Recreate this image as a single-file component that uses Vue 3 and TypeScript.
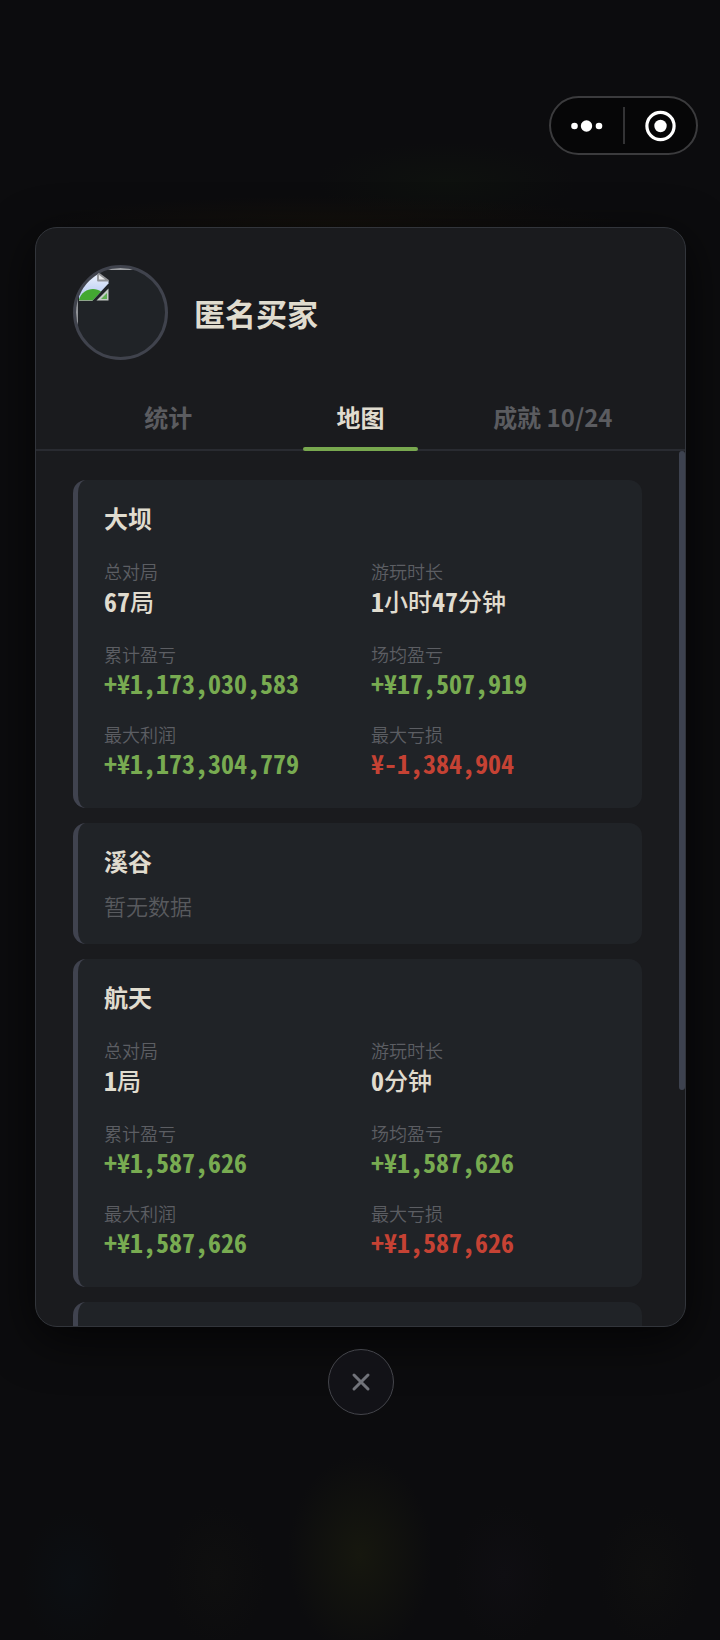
<script setup lang="ts">
import { ref } from 'vue'

type Tone = 'plain' | 'gain' | 'loss'

interface Stat {
  label: string
  value: string
  tone: Tone
}

interface GameMap {
  name: string
  stats: Stat[]
}

const tabs = ['统计', '地图', '成就 10/24']
const active = ref(1)

const labels = ['总对局', '游玩时长', '累计盈亏', '场均盈亏', '最大利润', '最大亏损']
const tones: Tone[] = ['plain', 'plain', 'gain', 'gain', 'gain', 'loss']

function toStats(values: string[]): Stat[] {
  return values.map((value, i) => ({ label: labels[i], value, tone: tones[i] }))
}

const maps: GameMap[] = [
  {
    name: '大坝',
    stats: toStats(['67局', '1小时47分钟', '+¥1,173,030,583', '+¥17,507,919', '+¥1,173,304,779', '¥-1,384,904']),
  },
  { name: '溪谷', stats: [] },
  {
    name: '航天',
    stats: toStats(['1局', '0分钟', '+¥1,587,626', '+¥1,587,626', '+¥1,587,626', '+¥1,587,626']),
  },
]

// Splits a value into Latin and Chinese runs, each set in its own face.
function runs(value: string): { text: string; han: boolean }[] {
  return (value.match(/[\u4e00-\u9fff]+|[^\u4e00-\u9fff]+/g) ?? []).map((text) => ({
    text,
    han: /[\u4e00-\u9fff]/.test(text),
  }))
}
</script>

<template>
  <div class="page">
    <header class="bar">
      <div class="capsule">
        <button type="button" class="capsule-btn" aria-label="更多">
          <svg width="32" height="32" viewBox="0 0 32 32" fill="#fff">
            <circle cx="3.5" cy="16" r="3.3" />
            <circle cx="15.5" cy="16" r="5.7" />
            <circle cx="28" cy="16" r="3.3" />
          </svg>
        </button>
        <span class="capsule-line"></span>
        <button type="button" class="capsule-btn" aria-label="关闭">
          <svg width="32" height="32" viewBox="0 0 32 32">
            <circle cx="16.5" cy="16" r="13.6" fill="none" stroke="#fff" stroke-width="3.2" />
            <circle cx="16.5" cy="16" r="6.2" fill="#fff" />
          </svg>
        </button>
      </div>
    </header>

    <main class="stage">
      <section class="modal">
        <div class="profile">
          <div class="avatar">
            <svg viewBox="0 0 89 89" width="89" height="89">
              <defs>
                <linearGradient id="sky" x1="0" y1="0" x2="0" y2="1">
                  <stop offset="0" stop-color="#eef3fd" />
                  <stop offset="1" stop-color="#adc4f0" />
                </linearGradient>
              </defs>
              <path d="M1 88V1H88" fill="none" stroke="#c4c6ca" stroke-width="1.4" />
              <path d="M3 5H22L32.5 13V15.5L16.5 32.5H3Z" fill="url(#sky)" />
              <path d="M3 31.5C5 25 11 21 17 21C20 21 23 22 25 23.5L16.5 32.5H3Z" fill="#43a832" />
              <path d="M32.5 20.5V32.5H20.5Z" fill="#c3cbc5" />
              <path d="M31 25V31H25Z" fill="#5fae52" />
              <path d="M3 32.5H16.5" stroke="#8fa58c" stroke-width="1.2" />
              <path d="M22 5V12.5H32Z" fill="#e9eaec" stroke="#909296" stroke-width="1.8" stroke-linejoin="round" />
            </svg>
          </div>
          <h1 class="name">匿名买家</h1>
        </div>

        <nav class="tabs" role="tablist">
          <button
            v-for="(tab, i) in tabs"
            :key="tab"
            type="button"
            role="tab"
            class="tab"
            :class="{ on: i === active }"
            :aria-selected="i === active"
            @click="active = i"
          >
            {{ tab }}
          </button>
        </nav>

        <div class="body">
          <div class="scroll">
            <article v-for="map in maps" :key="map.name" class="card">
              <h2 class="title">{{ map.name }}</h2>
              <dl v-if="map.stats.length" class="grid">
                <div v-for="stat in map.stats" :key="stat.label">
                  <dt class="label">{{ stat.label }}</dt>
                  <dd class="value" :class="stat.tone">
                    <span v-for="run in runs(stat.value)" :key="run.text" :class="run.han ? 'han' : 'num'">{{ run.text }}</span>
                  </dd>
                </div>
              </dl>
              <p v-else class="empty">暂无数据</p>
            </article>
            <article class="card next"></article>
          </div>
          <span class="thumb"></span>
        </div>
      </section>

      <button type="button" class="close" aria-label="关闭">
        <svg width="20" height="20" viewBox="0 0 20 20">
          <path d="M3 3L17 17M17 3L3 17" stroke="#71737a" stroke-width="3" stroke-linecap="round" />
        </svg>
      </button>
    </main>
  </div>
</template>

<style>
body {
  margin: 0;
  background: #0c0c0e;
}
</style>

<style scoped>
.page {
  box-sizing: border-box;
  min-height: 100vh;
  padding-top: 96px;
  font-family: 'Noto Sans CJK SC', sans-serif;
  color: #e0dccf;
  background:
    radial-gradient(ellipse 72px 100px at 50% 1555px, #16170e, transparent),
    radial-gradient(ellipse 50px 70px at 10% 1580px, #0c0f13, transparent),
    radial-gradient(ellipse 50px 70px at 30% 1575px, #0f0f0f, transparent),
    radial-gradient(ellipse 50px 70px at 70% 1575px, #0f0e12, transparent),
    radial-gradient(ellipse 50px 70px at 90% 1575px, #0f0f0f, transparent),
    radial-gradient(ellipse 290px 26px at 46% 222px, #13100c, transparent),
    radial-gradient(ellipse 130px 40px at 62% 182px, #0e110e, transparent),
    #0c0c0e;
}

.bar {
  display: flex;
  justify-content: flex-end;
  padding: 0 22px 72px;
}

.capsule {
  box-sizing: border-box;
  display: flex;
  align-items: center;
  width: 149px;
  height: 59px;
  border: 2px solid #3b3b3d;
  border-radius: 30px;
  background: #060607;
}

.capsule-btn {
  flex: 1;
  display: flex;
  align-items: center;
  justify-content: center;
  height: 100%;
  padding: 0;
  border: 0;
  background: none;
}

.capsule-line {
  width: 2px;
  height: 37px;
  background: #333335;
}

.stage {
  display: flex;
  flex-direction: column;
  align-items: center;
  gap: 22px;
  padding: 0 34px 0 35px;
}

.modal {
  box-sizing: border-box;
  display: flex;
  flex-direction: column;
  width: 100%;
  max-height: calc(100vh - 540px);
  overflow: hidden;
  border: 1px solid #32353b;
  border-radius: 22px;
  background: #1a1b1e;
  box-shadow: 0 12px 48px rgba(0, 0, 0, 0.7);
}

.profile {
  display: flex;
  align-items: center;
  gap: 26px;
  padding: 37px 37px 25px;
}

.avatar {
  box-sizing: border-box;
  flex: none;
  width: 95px;
  height: 95px;
  overflow: hidden;
  border: 3px solid #40434d;
  border-radius: 50%;
  background: #202327;
}

.avatar svg {
  display: block;
}

.name {
  margin: 0;
  font-size: 31px;
  line-height: 40px;
  font-weight: 700;
}

.tabs {
  display: flex;
  flex: none;
  padding: 0 36px;
  border-bottom: 2px solid #292b31;
}

.tab {
  position: relative;
  flex: 1;
  height: 64px;
  padding: 0;
  border: 0;
  background: none;
  font: 700 24px/36px 'Noto Sans CJK SC', sans-serif;
  color: #5b5c60;
}

.tab.on {
  color: #e0dccf;
}

.tab.on::after {
  content: '';
  position: absolute;
  right: 20%;
  bottom: -2px;
  left: 20%;
  height: 4px;
  border-radius: 2px;
  background: #78a84f;
}

.body {
  position: relative;
  display: flex;
  min-height: 0;
}

.scroll {
  flex: 1;
  display: flex;
  flex-direction: column;
  gap: 15px;
  padding: 29px 43px 29px 37px;
  overflow-y: auto;
  scrollbar-width: none;
}

.thumb {
  position: absolute;
  top: 0;
  right: 0;
  width: 6px;
  height: 73%;
  border-radius: 3px;
  background: #3d424f;
}

.card {
  flex: none;
  padding: 22px 26px 26px;
  border-left: 5px solid #40434f;
  border-radius: 13px;
  background: #202327;
}

.next {
  min-height: 280px;
}

.title {
  margin: 0;
  font-size: 24px;
  line-height: 32px;
  font-weight: 700;
}

.grid {
  display: grid;
  grid-template-columns: 1fr 1fr;
  gap: 23px 22px;
  margin: 24px 0 0;
  padding-bottom: 4px;
}

.label {
  font-size: 18px;
  line-height: 26px;
  font-weight: 350;
  color: #5c5e63;
}

.value {
  display: flex;
  align-items: center;
  margin: 0;
  height: 31px;
  font-size: 24px;
  line-height: 31px;
  font-weight: 700;
  white-space: nowrap;
}

.plain {
  height: 34px;
  line-height: 34px;
}

.han {
  font-weight: 500;
}

.num {
  font-family: 'Noto Sans Mono CJK SC', 'DejaVu Sans Mono', monospace;
  font-size: 26px;
  font-feature-settings: 'zero';
}

.gain {
  color: #78ab51;
}

.loss {
  color: #c54234;
}

.empty {
  margin: 15px 0 0;
  font-size: 22px;
  line-height: 26px;
  font-weight: 350;
  color: #585a5e;
}

.close {
  display: flex;
  align-items: center;
  justify-content: center;
  width: 66px;
  height: 66px;
  padding: 0;
  border: 1px solid #44454b;
  border-radius: 50%;
  background: #121217;
}
</style>
